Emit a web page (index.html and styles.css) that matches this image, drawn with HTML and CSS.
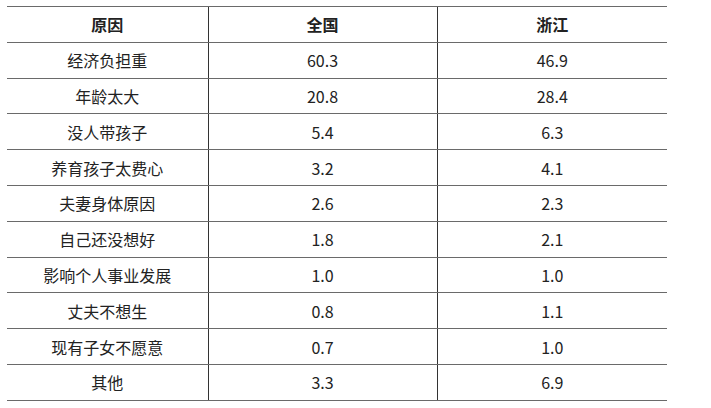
FILE: index.html
```html
<!DOCTYPE html>
<html lang="zh-CN">
<head>
<meta charset="utf-8">
<link rel="stylesheet" href="styles.css">
</head>
<body>
<div class="page">
<table class="data">
  <colgroup>
    <col class="c1"><col class="c2"><col class="c3">
  </colgroup>
  <thead>
    <tr><th>原因</th><th>全国</th><th>浙江</th></tr>
  </thead>
  <tbody>
    <tr><td>经济负担重</td><td>60.3</td><td>46.9</td></tr>
    <tr><td>年龄太大</td><td>20.8</td><td>28.4</td></tr>
    <tr><td>没人带孩子</td><td>5.4</td><td>6.3</td></tr>
    <tr><td>养育孩子太费心</td><td>3.2</td><td>4.1</td></tr>
    <tr><td>夫妻身体原因</td><td>2.6</td><td>2.3</td></tr>
    <tr><td>自己还没想好</td><td>1.8</td><td>2.1</td></tr>
    <tr><td>影响个人事业发展</td><td>1.0</td><td>1.0</td></tr>
    <tr><td>丈夫不想生</td><td>0.8</td><td>1.1</td></tr>
    <tr><td>现有子女不愿意</td><td>0.7</td><td>1.0</td></tr>
    <tr><td>其他</td><td>3.3</td><td>6.9</td></tr>
  </tbody>
</table>
</div>
</body>
</html>
```
FILE: styles.css
```css
html, body {
  margin: 0;
  padding: 0;
  background: #ffffff;
}
.page {
  padding: 6px 0 0 7px;
}
.data {
  width: 660px;
  border-collapse: collapse;
  table-layout: fixed;
  font-family: "Noto Sans CJK SC", "Open Sans", sans-serif;
  font-size: 16px;
  color: #222222;
}
.c1 { width: 201px; }
.c2 { width: 229px; }
.c3 { width: 230px; }
.data th, .data td {
  height: 34.8px;
  padding: 0;
  text-align: center;
  vertical-align: middle;
  border-top: 1px solid #6a6a6a;
  border-bottom: 1px solid #6a6a6a;
  line-height: 1;
}
.data th {
  font-weight: bold;
}
.data th + th, .data td + td {
  border-left: 1px solid #333333;
}
```
